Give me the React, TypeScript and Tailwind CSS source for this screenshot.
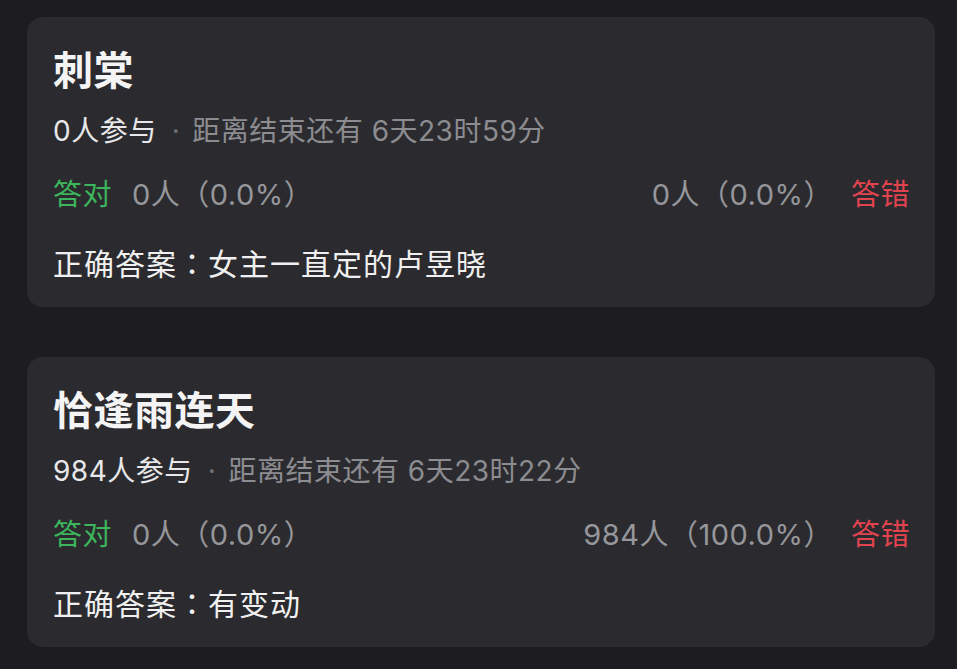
import React from 'react';

type Quiz = {
  title: string;
  joined: number;
  remain: string;
  right: string;
  wrong: string;
  answer: string;
};

const quizzes: Quiz[] = [
  {
    title: '刺棠',
    joined: 0,
    remain: '6天23时59分',
    right: '0人（0.0%）',
    wrong: '0人（0.0%）',
    answer: '女主一直定的卢昱晓',
  },
  {
    title: '恰逢雨连天',
    joined: 984,
    remain: '6天23时22分',
    right: '0人（0.0%）',
    wrong: '984人（100.0%）',
    answer: '有变动',
  },
];

const QuizCard = ({ q }: { q: Quiz }) => (
  <div className="w-[908px] rounded-[16px] bg-[#2b2b2f] pl-[26px] pr-[25px] pt-[30px] pb-[23px]">
    <h2 className="text-[40px] leading-[48px] font-bold tracking-[0.5px] text-[#f4f4f4]">{q.title}</h2>
    <div className="mt-[18px] flex items-center text-[28px] leading-[36px] tracking-[0.5px]">
      <span className="text-[#e8e8ea]">{q.joined}人参与</span>
      <span className="ml-[15px] mr-[12px] text-[#6f6f74]">·</span>
      <span className="text-[#8c8c91]">距离结束还有 {q.remain}</span>
    </div>
    <div className="mt-[26px] flex items-center justify-between text-[29px] leading-[40px] tracking-[0.5px]">
      <div className="flex items-center gap-[20px]">
        <span className="text-[#3cb55c]">答对</span>
        <span className="text-[#96969b]">{q.right}</span>
      </div>
      <div className="flex items-center gap-[18px]">
        <span className="text-[#96969b]">{q.wrong}</span>
        <span className="text-[#e2434f]">答错</span>
      </div>
    </div>
    <p className="mt-[27px] text-[30px] leading-[40px] tracking-[1px] text-[#f0f0f0]">
      正确答案
      <span style={{ fontFamily: '"Noto Sans CJK TC", sans-serif' }}>：</span>
      {q.answer}
    </p>
  </div>
);

export default function App() {
  return (
    <main
      className="min-h-[669px] w-[957px] bg-[#1d1d21] pl-[27px] pt-[17px] flex flex-col gap-[50px]"
      style={{ fontFamily: 'Inter, "Noto Sans CJK SC", sans-serif' }}
    >
      {quizzes.map((q) => (
        <QuizCard key={q.title} q={q} />
      ))}
    </main>
  );
}
